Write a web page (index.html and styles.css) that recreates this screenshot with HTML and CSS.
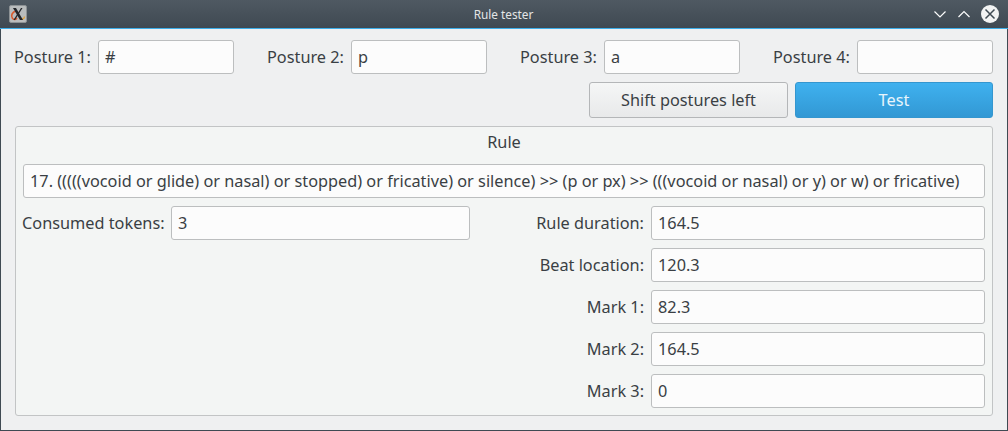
FILE: index.html
```html
<!DOCTYPE html>
<html lang="en">
<head>
    <meta charset="UTF-8">
    <title>Rule tester</title>
    <link rel="stylesheet" href="styles.css">
</head>
<body>
    <div class="window">
        <div class="titlebar">
            <div class="app-icon">
                <svg width="18" height="18" viewBox="0 0 18 18">
                    <rect x="0.5" y="0.5" width="17" height="17" rx="1.5" fill="#b9bcbd" stroke="#8d9295"/>
                    <path d="M7 6 C3 7 1.5 11 3.5 13.5 C5 15 7 14.5 8 13" fill="none" stroke="#d8582a" stroke-width="1.6"/>
                    <path d="M10.5 13.5 C12.5 15 15.5 14 15.5 11.5" fill="none" stroke="#e3a23e" stroke-width="1.4"/>
                    <path d="M4 3 L7 3 L14 15 L11 15 Z" fill="#23262a"/>
                    <path d="M12 3 L13.5 3 L6 15 L4.5 15 Z" fill="#23262a"/>
                </svg>
            </div>
            <div class="title">Rule tester</div>
            <div class="win-buttons">
                <svg width="14" height="14" viewBox="0 0 14 14"><path d="M1.5 4.5 L7 10 L12.5 4.5" fill="none" stroke="#fcfcfc" stroke-width="1.2"/></svg>
                <svg width="14" height="14" viewBox="0 0 14 14"><path d="M1.5 10 L7 4.5 L12.5 10" fill="none" stroke="#fcfcfc" stroke-width="1.2"/></svg>
                <svg width="18" height="18" viewBox="0 0 18 18">
                    <circle cx="9" cy="9" r="9" fill="#f2f3f3"/>
                    <path d="M4.5 4.5 L13.5 13.5 M13.5 4.5 L4.5 13.5" stroke="#3f4a53" stroke-width="1.5"/>
                </svg>
            </div>
        </div>
        <div class="content">
            <div class="postures">
                <div class="posture"><label>Posture 1:</label><input class="field" value="#"></div>
                <div class="posture"><label>Posture 2:</label><input class="field" value="p"></div>
                <div class="posture"><label>Posture 3:</label><input class="field" value="a"></div>
                <div class="posture"><label>Posture 4:</label><input class="field" value=""></div>
            </div>
            <div class="actions">
                <button class="button">Shift postures left</button>
                <button class="button primary">Test</button>
            </div>
            <div class="group">
                <div class="group-title">Rule</div>
                <input class="field rule-text" value="17. (((((vocoid or glide) or nasal) or stopped) or fricative) or silence) &gt;&gt; (p or px) &gt;&gt; (((vocoid or nasal) or y) or w) or fricative)">
                <div class="details">
                    <div class="consumed"><label>Consumed tokens:</label><input class="field" value="3"></div>
                    <div class="values">
                        <label>Rule duration:</label><input class="field" value="164.5">
                        <label>Beat location:</label><input class="field" value="120.3">
                        <label>Mark 1:</label><input class="field" value="82.3">
                        <label>Mark 2:</label><input class="field" value="164.5">
                        <label>Mark 3:</label><input class="field" value="0">
                    </div>
                </div>
            </div>
        </div>
    </div>
</body>
</html>
```

FILE: styles.css
```css
* { box-sizing: border-box; }
html, body { margin: 0; padding: 0; }
body { font-family: "Noto Sans", sans-serif; font-size: 16.3px; color: #3a3f44; background-color: #eff0f1; }

.window { width: 1008px; height: 431px; display: flex; flex-direction: column; border: 1px solid #3f4a53; border-top: none; background-color: #eff0f1; }

.titlebar { height: 29px; flex: none; margin: 0 -1px; padding: 0 9px 1px; display: flex; align-items: center; background: linear-gradient(#4f5962, #3f4952); border-bottom: 1px solid #3daee9; }
.app-icon { flex: 1; height: 18px; }
.app-icon svg { display: block; }
.title { margin-right: 1px; text-align: center; color: #e3e5e6; font-size: 11.8px; }
.win-buttons { flex: 1; display: flex; justify-content: flex-end; align-items: center; gap: 10px; }
.win-buttons svg { display: block; }

.content { flex: 1; padding: 11px 14px 14px 13px; }

.field { height: 34px; padding: 0 6px; font: inherit; color: #3a3f44; background-color: #fcfcfc; border: 1px solid #bcbebf; border-radius: 3px; outline: none; }

.postures { display: flex; gap: 33px; }
.posture { width: 220px; display: flex; align-items: center; justify-content: space-between; }
.posture .field { width: 136px; }

.actions { display: flex; justify-content: flex-end; gap: 7px; margin-top: 8px; }
.button { width: 199px; height: 36px; font: inherit; color: #3a3f44; background: linear-gradient(#f5f6f6, #e8e9ea); border: 1px solid #b4b6b8; border-radius: 3px; }
.button.primary { width: 198px; color: #e8f5fc; background: linear-gradient(#3fb1ef, #3298d4); border-color: #3496cf; }

.group { height: 290px; margin-top: 8px; margin-left: 1px; padding: 0 7px; background-color: #f3f5f4; border: 1px solid #c2c4c5; border-radius: 3px; }
.group-title { height: 37px; line-height: 31px; text-align: center; }
.rule-text { display: block; width: 100%; }

.details { display: flex; margin-top: 8px; }
.consumed { width: 448px; height: 34px; margin-left: -1px; display: flex; align-items: center; justify-content: space-between; }
.consumed .field { width: 299px; }
.values { flex: 1; display: grid; grid-template-columns: 1fr 334px; align-items: center; gap: 8px 7px; }
.values label { text-align: right; }
.values .field { width: 100%; }
```
